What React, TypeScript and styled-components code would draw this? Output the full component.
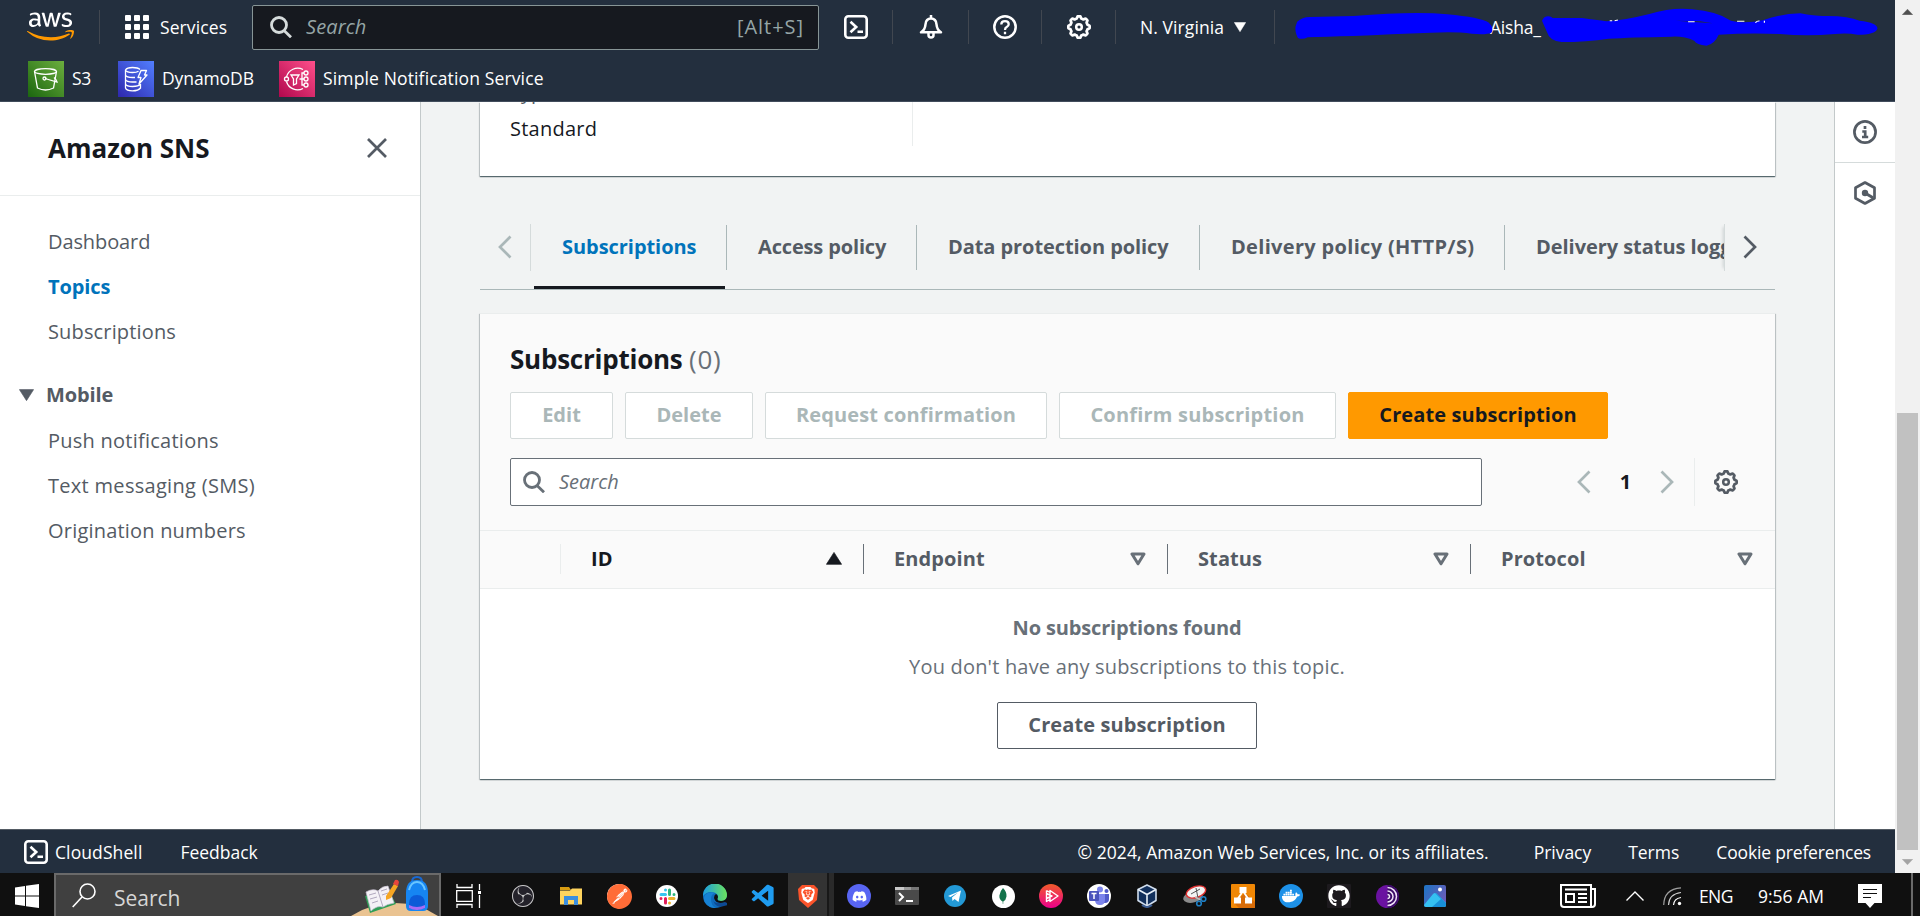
import React from "react";
import styled, { createGlobalStyle, css } from "styled-components";
import { FaAws, FaDiscord, FaDocker, FaGithub } from "react-icons/fa";
import { SiBrave, SiPostman, SiObsstudio } from "react-icons/si";
import { VscVscode } from "react-icons/vsc";

const colors = {
  navy: "#232f3e",
  ink: "#16191f",
  text: "#545b64",
  muted: "#687078",
  link: "#0073bb",
  disabled: "#aab7b8",
  line: "#eaeded",
  orange: "#ff9900",
};

const GlobalStyle = createGlobalStyle`
  * { box-sizing: border-box; }
  body {
    margin: 0;
    overflow: hidden;
    font-family: "Open Sans", "Noto Sans", sans-serif;
    font-size: 20px;
    color: ${colors.ink};
  }
  svg { display: block; flex: none; }
`;

/* ---------- page frame ---------- */

const Screen = styled.div`
  width: 1920px;
  height: 916px;
  display: flex;
  flex-direction: column;
  overflow: hidden;
`;

const BrowserView = styled.div`
  display: flex;
  height: 873px;
`;

const Page = styled.div`
  flex: 1;
  min-width: 0;
  display: flex;
  flex-direction: column;
`;

const Body = styled.div`
  flex: 1;
  min-height: 0;
  display: flex;
`;

/* ---------- top navigation ---------- */

const Header = styled.header`
  height: 102px;
  background: ${colors.navy};
  border-bottom: 1px solid #414d5c;
  color: #fff;
  font-size: 17.5px;
  font-weight: 500;
`;

const NavRow = styled.div`
  position: relative;
  height: 54px;
  display: flex;
  align-items: center;
  padding: 0 0 1px 27px;
`;

const NavRule = styled.i`
  width: 1px;
  height: 34px;
  background: #414750;
`;

const LogoLink = styled.a`
  display: flex;
  width: 72px;
  svg { fill: url(#awsFill); }
`;

const ServicesButton = styled.div`
  display: flex;
  align-items: center;
  gap: 11px;
  width: 152px;
  padding-left: 25px;
  letter-spacing: 0.1px;
`;

const GlobalSearch = styled.div`
  width: 567px;
  height: 45px;
  margin-top: 2px;
  display: flex;
  align-items: center;
  padding: 0 15px 2px 17px;
  border: 1px solid #879596;
  border-radius: 2px;
  background: ${colors.ink};
  color: #95a5a6;
  font-size: 20px;
  font-weight: 400;
  em { flex: 1; margin-left: 14px; letter-spacing: 0.1px; }
  span { letter-spacing: 0.95px; margin-right: -1px; }
`;

const NavCell = styled.div<{ $width: number }>`
  width: ${(p) => p.$width}px;
  height: 34px;
  display: flex;
  align-items: center;
  justify-content: center;
  gap: 10px;
  border-right: 1px solid #414750;
`;

const RegionLabel = styled.span`
  letter-spacing: 0.1px;
  margin-left: -4px;
`;

const Account = styled.div`
  padding-left: 215px;
  letter-spacing: -0.2px;
`;

const Redaction = styled.svg`
  position: absolute;
  left: 1280px;
  top: 0;
`;

const Favorites = styled.div`
  height: 47px;
  display: flex;
  align-items: center;
  gap: 26px;
  padding: 3px 0 0 28px;
`;

const Favorite = styled.div<{ $width?: number; $track?: number }>`
  display: flex;
  align-items: center;
  gap: 8px;
  width: ${(p) => (p.$width ? `${p.$width}px` : "auto")};
  letter-spacing: ${(p) => p.$track ?? 0}px;
  white-space: nowrap;
  span { padding-bottom: 2px; }
`;

/* ---------- side navigation ---------- */

const Sidebar = styled.nav`
  width: 421px;
  background: #fff;
  border-right: 1px solid #c3c9ca;
  box-shadow: 1px 0 1px rgba(0, 28, 36, 0.1);
`;

const SidebarHead = styled.div`
  height: 94px;
  display: flex;
  align-items: center;
  justify-content: space-between;
  padding: 0 32px 2px 48px;
  border-bottom: 1px solid ${colors.line};
  font-size: 26px;
  font-weight: 700;
`;

const NavList = styled.ul`
  list-style: none;
  margin: 0;
  padding: 23px 0 0 48px;
`;

const NavItem = styled.li<{ $active?: boolean; $track?: number }>`
  line-height: 45px;
  letter-spacing: ${(p) => p.$track ?? 0}px;
  color: ${(p) => (p.$active ? colors.link : colors.text)};
  font-weight: ${(p) => (p.$active ? 700 : 400)};
`;

const NavGroup = styled.li`
  display: flex;
  align-items: center;
  gap: 12px;
  margin: 18px 0 1px -29px;
  height: 45px;
  color: ${colors.text};
  font-weight: 700;
  letter-spacing: -0.1px;
`;

/* ---------- main content ---------- */

const Main = styled.main`
  flex: 1;
  min-width: 0;
  padding: 0 59px;
  background: #f1f3f3;
`;

const cardShadow = css`
  box-shadow: 0 1px 1px 0 rgba(0, 28, 36, 0.5), 1px 1px 1px 0 rgba(0, 28, 36, 0.15),
    -1px 1px 1px 0 rgba(0, 28, 36, 0.15);
`;

const DetailsCard = styled.section`
  height: 74px;
  display: flex;
  align-items: flex-end;
  padding: 0 30px 30px;
  background: #fff;
  overflow: hidden;
  ${cardShadow}
`;

const DetailColumn = styled.dl`
  width: 403px;
  margin: 0;
  border-right: 1px solid ${colors.line};
  dt { line-height: 37px; color: ${colors.text}; }
  dd { margin: 0; padding-top: 2px; line-height: 34px; letter-spacing: 0.25px; }
`;

const TabBar = styled.div`
  display: flex;
  height: 66px;
  margin: 48px 0 23px;
  border-bottom: 1px solid ${colors.disabled};
`;

const TabScroll = styled.div<{ $side: "left" | "right" }>`
  width: 51px;
  height: 47px;
  display: flex;
  align-items: center;
  justify-content: center;
  padding-bottom: 1px;
  ${(p) =>
    p.$side === "left"
      ? css`border-right: 1px solid #d5dbdb;`
      : css`border-left: 1px solid #d5dbdb; box-shadow: -4px 0 3px -3px rgba(0, 28, 36, 0.15);`}
`;

const TabList = styled.div`
  flex: 1;
  min-width: 0;
  display: flex;
  overflow: hidden;
`;

const Tab = styled.div<{ $active?: boolean; $width: number; $track?: number }>`
  flex: none;
  width: ${(p) => p.$width}px;
  display: flex;
  flex-direction: column;
  justify-content: space-between;
  padding-top: 1px;
  font-weight: 700;
  letter-spacing: ${(p) => p.$track ?? 0}px;
  white-space: nowrap;
  color: ${(p) => (p.$active ? colors.link : colors.text)};
  span {
    height: 45px;
    line-height: 43px;
    padding-left: 31px;
    border-right: 1px solid ${colors.disabled};
  }
  &::after {
    content: "";
    height: 3px;
    margin: 0 2px 0 3px;
    background: ${(p) => (p.$active ? colors.ink : "transparent")};
  }
`;

const TableCard = styled.section`
  height: 466px;
  background: #fff;
  ${cardShadow}
`;

const TableTop = styled.div`
  height: 218px;
  padding: 26px 30px 0;
  background: #fafafa;
  border-top: 1px solid ${colors.line};
  border-bottom: 1px solid ${colors.line};
`;

const TableTitle = styled.h2`
  margin: 0 0 14px;
  font-size: 26px;
  line-height: 38px;
  letter-spacing: -0.24px;
  small {
    font-size: 26px;
    font-weight: 400;
    letter-spacing: 0.7px;
    color: ${colors.muted};
  }
`;

const ButtonRow = styled.div`
  display: flex;
  gap: 12px;
`;

const Button = styled.button<{ $kind?: "disabled" | "primary"; $width: number; $track?: number }>`
  width: ${(p) => p.$width}px;
  height: 47px;
  padding: 0 0 1px;
  border: 1px solid ${colors.text};
  border-radius: 2px;
  background: #fff;
  color: ${colors.text};
  font: 700 20px/44px "Open Sans", sans-serif;
  letter-spacing: ${(p) => p.$track ?? 0.1}px;
  white-space: nowrap;
  ${(p) => p.$kind === "disabled" && css`border-color: #d5dbdb; color: ${colors.disabled};`}
  ${(p) => p.$kind === "primary" && css`border-color: ${colors.orange}; background: ${colors.orange}; color: ${colors.ink};`}
`;

const FilterRow = styled.div`
  display: flex;
  align-items: center;
  margin-top: 19px;
`;

const FilterInput = styled.div`
  width: 972px;
  height: 48px;
  display: flex;
  align-items: center;
  gap: 14px;
  padding: 0 0 1px 12px;
  border: 1px solid ${colors.muted};
  border-radius: 2px;
  background: #fff;
  color: ${colors.muted};
  em { padding-bottom: 1px; }
`;

const Pagination = styled.div`
  display: flex;
  align-items: center;
  width: 213px;
  height: 48px;
  padding: 0 20px 1px 95px;
  justify-content: space-between;
  border-right: 1px solid ${colors.line};
  font-weight: 700;
`;

const Preferences = styled.div`
  padding-left: 19px;
`;

const HeadRow = styled.div`
  display: grid;
  grid-template-columns: 81px 303px 304px 303px 304px;
  align-items: center;
  height: 58px;
  padding-bottom: 1px;
  background: #fafafa;
  border-bottom: 1px solid ${colors.line};
`;

const HeadCell = styled.div<{ $tone?: "faint" | "none"; $sorted?: boolean }>`
  height: 30px;
  display: flex;
  align-items: center;
  justify-content: space-between;
  padding: 0 21px 1px 30px;
  border-right: 1px solid
    ${(p) => (p.$tone === "none" ? "transparent" : p.$tone === "faint" ? colors.line : colors.muted)};
  color: ${(p) => (p.$sorted ? colors.ink : colors.text)};
  font-weight: 700;
  letter-spacing: 0.1px;
`;

const EmptyState = styled.div`
  display: flex;
  flex-direction: column;
  align-items: center;
  padding: 19px 1px 0 0;
  color: ${colors.muted};
  line-height: 40px;
  b { letter-spacing: -0.15px; }
  p { margin: -1px 0 15px; letter-spacing: 0.19px; }
`;

/* ---------- right rail, footer, scrollbar ---------- */

const HelpRail = styled.aside`
  width: 61px;
  background: #fff;
  border-left: 1px solid #c3c9ca;
`;

const RailItem = styled.div`
  height: 61px;
  display: flex;
  align-items: center;
  justify-content: center;
  border-bottom: 1px solid #d5dbdb;
  &:last-child { height: 60px; border: 0; }
`;

const Footer = styled.footer`
  height: 44px;
  display: flex;
  align-items: center;
  padding: 1px 24px 0;
  background: ${colors.navy};
  border-top: 1px solid #545b64;
  color: #fff;
  font-size: 17.5px;
  font-weight: 500;
`;

const FooterItem = styled.span<{ $before: number; $track?: number }>`
  margin-left: ${(p) => p.$before}px;
  padding-bottom: 1px;
  letter-spacing: ${(p) => p.$track ?? 0}px;
  white-space: nowrap;
`;

const Spacer = styled.span`
  flex: 1;
`;

const Scrollbar = styled.div`
  width: 25px;
  display: flex;
  flex-direction: column;
  align-items: center;
  justify-content: space-between;
  background: #f1f1f1;
`;

const ScrollArrow = styled.div`
  height: 23px;
  display: flex;
  align-items: center;
`;

const ScrollThumb = styled.div`
  width: 21px;
  height: 437px;
  margin-top: auto;
  background: #c1c1c1;
`;

/* ---------- desktop taskbar ---------- */

const Taskbar = styled.div`
  flex: 1;
  display: flex;
  background: #101010;
  color: #fff;
`;

const StartButton = styled.div`
  width: 54px;
  display: flex;
  align-items: center;
  padding: 3px 0 0 15px;
`;

const TaskSearch = styled.div`
  width: 387px;
  display: flex;
  align-items: center;
  padding-left: 16px;
  border: 2px solid #6a6a6a;
  border-bottom-width: 0;
  background: #404040;
  color: #d6d6d6;
  font-size: 21px;
  span { flex: 1; margin-left: 18px; padding-top: 4px; }
`;

const TaskView = styled.div`
  width: 58px;
  padding: 11px 0 0 15px;
`;

const AppButton = styled.div<{ $active?: boolean }>`
  width: 48px;
  display: flex;
  align-items: center;
  justify-content: center;
  padding-top: 3px;
  ${(p) =>
    p.$active &&
    css`
      padding-right: 6px;
      background: linear-gradient(90deg, transparent 1px, #333 1px 40px, #181818 40px 42px, #2a2a2a 42px 47px, transparent 47px);
    `}
`;

const Badge = styled.div<{ $bg: string; $size?: number; $square?: boolean }>`
  width: ${(p) => p.$size ?? 24}px;
  height: ${(p) => p.$size ?? 24}px;
  display: flex;
  align-items: center;
  justify-content: center;
  border-radius: ${(p) => (p.$square ? 1 : 12)}px;
  background: ${(p) => p.$bg};
  color: #fff;
`;

const Tray = styled.div`
  flex: 1;
  display: flex;
  align-items: center;
  justify-content: flex-end;
  padding: 3px 7px 0 0;
  font-size: 17.5px;
`;

const TrayLabel = styled.span<{ $width: number; $track?: number }>`
  width: ${(p) => p.$width}px;
  letter-spacing: ${(p) => p.$track ?? 0}px;
  white-space: nowrap;
`;

const TrayIcon = styled.span<{ $width: number }>`
  width: ${(p) => p.$width}px;
`;

const ShowDesktop = styled.i`
  width: 2px;
  height: 43px;
  margin-top: -3px;
  background: #6a6a6a;
`;

/* ---------- icons ---------- */

const gearPath = (() => {
  const pts: string[] = [];
  for (let i = 0; i < 96; i++) {
    const a = (i / 96) * Math.PI * 2;
    const wave = Math.max(-1, Math.min(1, 1.9 * Math.cos(8 * a)));
    const r = 9.7 + wave * 1;
    pts.push(`${(12 + r * Math.sin(a)).toFixed(2)} ${(12 - r * Math.cos(a)).toFixed(2)}`);
  }
  return `M${pts.join("L")}Z`;
})();

const Gear = ({ size = 24, color = "#fff" }) => (
  <svg width={size} height={size} viewBox="0 0 24 24" fill="none" stroke={color} strokeWidth="2.7">
    <path d={gearPath} strokeLinejoin="round" />
    <circle cx="12" cy="12" r="2.8" strokeWidth="2.5" />
  </svg>
);

const Magnifier = ({ color, size = 22 }: { color: string; size?: number }) => (
  <svg width={size} height={size} viewBox="0 0 22 22" fill="none" stroke={color} strokeWidth="2.8">
    <circle cx="9" cy="9" r="7.5" />
    <path d="M14 14.5l7 6.8" />
  </svg>
);

const Chevron = ({ dir, color }: { dir: "left" | "right"; color: string }) => (
  <svg width="14" height="24" viewBox="0 0 14 24" fill="none" stroke={color} strokeWidth="2.7">
    <path d={dir === "left" ? "M12.500 1.500L2 12l10.500 10.500" : "M1.500 1.500L12 12 1.500 22.500"} />
  </svg>
);

const Shell = () => (
  <svg width="24" height="24" viewBox="0 0 24 24" fill="none" stroke="#fff" strokeWidth="2.6">
    <rect x="1.300" y="1.300" width="21.400" height="21.400" rx="3" />
    <path d="M6.500 6.800l5.700 5.200-5.700 5.200M13.500 16.700H19" />
  </svg>
);

const Caret = ({ w = 12, h = 10, color = "#fff", up = false }) => (
  <svg width={w} height={h} viewBox="0 0 12 10" preserveAspectRatio="none">
    <path d={up ? "M6 .3L11.700 9.500H.3z" : "M.3.500h11.400L6 9.700z"} fill={color} stroke={color} strokeWidth=".5" strokeLinejoin="round" />
  </svg>
);

const SortCaret = () => (
  <svg width="16" height="14" viewBox="0 0 16 14">
    <path d="M2 2h12L8 11.800z" fill="none" stroke={colors.muted} strokeWidth="3" strokeLinejoin="round" />
  </svg>
);

const ServiceTile = ({ id, from, to, children }: { id: string; from: string; to: string; children: React.ReactNode }) => (
  <svg width="36" height="36" viewBox="0 0 36 36" fill="none" stroke="#fff" strokeWidth="1.300">
    <defs>
      <linearGradient id={id} x1="0" y1="1" x2="1" y2="0">
        <stop stopColor={from} />
        <stop offset="1" stopColor={to} />
      </linearGradient>
    </defs>
    <rect width="36" height="36" fill={`url(#${id})`} stroke="none" />
    {children}
  </svg>
);

const BookAndBag = () => (
  <svg width="88" height="41" viewBox="0 0 88 41">
    <path d="M0 41Q20 28 44 28t43 13z" fill="#eac391" />
    <path d="M14 21l24-5 7 13-26 9z" fill="#2e9e56" />
    <path d="M15 17q7-4 12-1 4-5 10-5l6 17q-7 1-11 4-6-2-12 4z" fill="#f4f1f6" stroke="#c9c2d3" strokeWidth=".7" />
    <path d="M27 16l5 16M18 20l7-2M19 24l7-2M21 28l6-2M30 16l6-2M31 20l6-2" stroke="#a9a0b8" strokeWidth=".9" />
    <path d="M35 21L43 9l4 2-7 12-5 2z" fill="#f6a623" />
    <path d="M42 9l2-4q3-1 4 2l-1 4z" fill="#e8453c" />
    <g transform="translate(2 1)">
      <path d="M59 6q0-5 5-5t5 5" fill="none" stroke="#1769d6" strokeWidth="2" />
      <path d="M53 17q0-13 11-13t11 13v13q0 5-5 5H58q-5 0-5-5z" fill="#1685f2" />
      <path d="M56 14Q58 6 64 6t8 8" fill="none" stroke="#69c5ff" strokeWidth="2" />
      <path d="M56 28q0-9 8-9t8 9v4q-8 3-16 0z" fill="#0c5bd8" />
      <path d="M56 29q8 4 16 0v3q-8 4-16 0z" fill="#a86cf5" />
    </g>
  </svg>
);

const Explorer = () => (
  <svg width="24" height="20" viewBox="0 0 24 20">
    <path d="M1 1h9l2 3H1z" fill="#d89c12" />
    <path d="M1 4.500h10l2-2h10v16H1z" fill="#ffd45e" />
    <path d="M5 19v-9h14v9h-4v-5H9v5z" fill="#3b8ede" />
  </svg>
);

const Slack = () => (
  <svg width="17" height="17" viewBox="0 0 17 17" strokeWidth="3" strokeLinecap="round">
    <path d="M6.500 2v0M2 6.500h4.500" stroke="#36c5f0" />
    <path d="M10.500 2v4.500M15 6.500v0" stroke="#2eb67d" />
    <path d="M10.500 10.500H15M10.500 15v0" stroke="#ecb22e" />
    <path d="M6.500 10.500V15M2 10.500v0" stroke="#e01e5a" />
  </svg>
);

const Edge = () => (
  <svg width="24" height="24" viewBox="0 0 24 24">
    <defs>
      <linearGradient id="edgeTop" x1="0" x2="1">
        <stop stopColor="#1b9de2" />
        <stop offset="1" stopColor="#6be35c" />
      </linearGradient>
    </defs>
    <circle cx="12" cy="12" r="12" fill="#0f6cbd" />
    <path d="M0 12A12 12 0 0 1 24 11q0 6-6 6-4 0-3.500-2.500Q16 11 12.500 9 5 6 0 12z" fill="url(#edgeTop)" />
    <path d="M8 15q0-5 4-6-6-2-10 2-3 5 2 10 4 3.500 9 3-5-2-5-9z" fill="#1782d4" />
    <path d="M10 14q-1 7 12 4l1-1h2v4l-8 2Q10 21 10 14z" fill="#0d4a94" />
    <path d="M14.500 14.500Q14 17 18 17q4.500-.2 6-4v6l-2-1q-9 3-11-4 0-3 2-4 3 2 1.500 4.500z" fill="#101010" />
  </svg>
);

const Prompt = () => (
  <svg width="24" height="18" viewBox="0 0 24 18">
    <rect width="24" height="18" rx="1" fill="#4a4a4a" />
    <path d="M0 0h9v3H0z" fill="#c8c8c8" />
    <path d="M9 0h7v3H9z" fill="#9a9a9a" />
    <path d="M16 0h8v3h-8z" fill="#777" />
    <path d="M4 6l4 4-4 4M11 14h7" fill="none" stroke="#fff" strokeWidth="2" />
  </svg>
);

const Telegram = () => (
  <svg width="22" height="22" viewBox="0 0 22 22">
    <path d="M4 11l13-5.500-2.500 11.500-4-3-2 2-.5-3.500 6-5-7.500 4.500z" fill="#fff" />
  </svg>
);

const Play = () => (
  <svg width="24" height="24" viewBox="0 0 24 24" fill="none" stroke="#fff" strokeWidth="1.400" strokeLinejoin="round">
    <path d="M7.500 6.500v11l3.500-2M7.500 6.500l3.500 2M11 6.500v11l8-5.500zM7.500 9.500L13 12l-5.500 2.500z" />
  </svg>
);

const Teams = () => (
  <svg width="22" height="22" viewBox="0 0 22 22">
    <circle cx="12" cy="4.500" r="3" fill="#7b83eb" />
    <circle cx="18.500" cy="6" r="2" fill="#5059c9" />
    <path d="M15 9h6v5q0 4-4 4h-2z" fill="#5059c9" />
    <path d="M7 9h10v6q0 5-5 5t-5-5z" fill="#7b83eb" />
    <rect x="1" y="6" width="10" height="10" rx="1" fill="#4b53bc" />
    <path d="M3.500 8.500h5M6 8.500V14" stroke="#fff" strokeWidth="1.500" />
  </svg>
);

const VirtualBox = () => (
  <svg width="22" height="24" viewBox="0 0 22 24">
    <path d="M11 1l9 4.500v11L11 22l-9-5.500v-11z" fill="#12305c" stroke="#cfdcec" strokeWidth="1.600" strokeLinejoin="round" />
    <path d="M2 5.500l9 5 9-5M11 10.500V22" fill="none" stroke="#e8f0f8" strokeWidth="1.600" />
    <path d="M6 21q5 4 10 0" fill="none" stroke="#3b5d94" strokeWidth="2" />
  </svg>
);

const Snip = () => (
  <svg width="24" height="22" viewBox="0 0 24 22">
    <ellipse cx="10" cy="12" rx="10" ry="5.500" fill="#8b8b8b" transform="rotate(-15 10 12)" />
    <ellipse cx="13" cy="7" rx="10" ry="5.500" fill="#f3f3f3" stroke="#e03131" strokeWidth="1.400" transform="rotate(-18 13 7)" />
    <path d="M8 9l9-5M13 3l2 10" stroke="#555" />
    <path d="M12 12l6 3" stroke="#bbb" strokeWidth="1.500" />
    <circle cx="20.500" cy="14" r="2.300" fill="none" stroke="#1e7fc4" strokeWidth="1.600" />
    <circle cx="16" cy="18.500" r="2.300" fill="none" stroke="#1e7fc4" strokeWidth="1.600" />
  </svg>
);

const DrawIo = () => (
  <svg width="24" height="24" viewBox="0 0 24 24">
    <path d="M14 9l10 9v6H8l-5-5z" fill="#d86c08" />
    <path d="M12 7L6 16M12 7l6 9" stroke="#fff" strokeWidth="1.800" />
    <path d="M8.500 3h7v6h-7zM3 13.500h7v6H3zM14 13.500h7v6h-7z" fill="#fff" />
  </svg>
);

const Tor = () => (
  <svg width="23" height="23" viewBox="0 0 23 23">
    <circle cx="11.500" cy="11.500" r="11.500" fill="#6a12a0" />
    <path d="M11.500 0a11.500 11.500 0 0 1 0 23z" fill="#3a0a66" />
    <path d="M11.500 2.500a9 9 0 0 1 0 18M11.500 6a5.500 5.500 0 0 1 0 11M11.500 9.500a2 2 0 0 1 0 4" fill="none" stroke="#efe3f7" strokeWidth="1.500" />
  </svg>
);

const Photos = () => (
  <svg width="22" height="22" viewBox="0 0 22 22">
    <defs>
      <linearGradient id="photoSky" x2="1" y2=".6">
        <stop stopColor="#1c74c4" />
        <stop offset="1" stopColor="#6a5cb8" />
      </linearGradient>
    </defs>
    <rect width="22" height="22" rx="2" fill="url(#photoSky)" />
    <path d="M0 20L9 9q2-2 4 0l9 9v2q0 2-2 2H2q-2 0-2-2z" fill="#35c1f1" />
    <path d="M11 8q1 0 2 1l9 9v2q0 2-2 2H8L17 14z" fill="#1890d8" />
    <circle cx="16" cy="4.500" r="2" fill="#fff" />
  </svg>
);

/* ---------- data ---------- */

const tabs = [
  { label: "Subscriptions", width: 196, track: -0.05, active: true },
  { label: "Access policy", width: 190, track: -0.15 },
  { label: "Data protection policy", width: 283, track: -0.07 },
  { label: "Delivery policy (HTTP/S)", width: 305, track: 0.32 },
  { label: "Delivery status logging", width: 300, track: -0.05 },
];

const taskApps: { name: string; icon: React.ReactNode; active?: boolean }[] = [
  { name: "obs", icon: <Badge $bg="#24222a" $size={22}><SiObsstudio size={22} color="#c9c9c9" /></Badge> },
  { name: "explorer", icon: <Explorer /> },
  { name: "postman", icon: <Badge $bg="#fff"><SiPostman size={25} color="#ff6c37" /></Badge> },
  { name: "slack", icon: <Badge $bg="#fff" $size={22}><Slack /></Badge> },
  { name: "edge", icon: <Edge /> },
  { name: "code", icon: <VscVscode size={27} color="#1f9cf0" /> },
  {
    name: "brave",
    active: true,
    icon: (
      <svg width="20" height="24" viewBox="0 0 20 24">
        <path d="M4 1h12l4 4-1 11-9 8-9-8L0 5z" fill="#fb542b" />
        <SiBrave x={2} y={3} size={16} color="#fff" />
      </svg>
    ),
  },
  { name: "discord", icon: <Badge $bg="#5865f2"><FaDiscord size={15} /></Badge> },
  { name: "prompt", icon: <Prompt /> },
  { name: "telegram", icon: <Badge $bg="#2399d6" $size={22}><Telegram /></Badge> },
  {
    name: "mongo",
    icon: (
      <Badge $bg="#fff" $size={23}>
        <svg width="8" height="16" viewBox="0 0 8 16">
          <path d="M4 0Q8 4 7.500 8.500 7 12 4.300 13.500L4.200 16h-.4l-.2-2.500Q0 11.500.4 7.500 1 3 4 0z" fill="#13734b" />
        </svg>
      </Badge>
    ),
  },
  { name: "play", icon: <Badge $bg="linear-gradient(#f15b2a, #ec008c)"><Play /></Badge> },
  { name: "teams", icon: <Badge $bg="#fff"><Teams /></Badge> },
  { name: "virtualbox", icon: <VirtualBox /> },
  { name: "snip", icon: <Snip /> },
  { name: "drawio", icon: <Badge $bg="#f08705" $square><DrawIo /></Badge> },
  { name: "docker", icon: <Badge $bg="#1d91e8"><FaDocker size={18} /></Badge> },
  { name: "github", icon: <Badge $bg="#1d1a1e" $square><FaGithub size={22} /></Badge> },
  { name: "tor", icon: <Tor /> },
  { name: "photos", icon: <Photos /> },
];

/* ---------- sections ---------- */

const TopNavigation = () => (
  <Header>
    <NavRow>
      <svg width="0" height="0">
        <linearGradient id="awsFill" gradientUnits="userSpaceOnUse" x1="0" y1="0" x2="0" y2="512">
          <stop offset=".595" stopColor="#fff" />
          <stop offset=".595" stopColor="#ff9900" />
        </linearGradient>
      </svg>
      <LogoLink>
        <FaAws size="47px" />
      </LogoLink>
      <NavRule />
      <ServicesButton>
        <svg width="24" height="24" fill="#fff">
          {[0, 9, 18].map((y) => [0, 9, 18].map((x) => <rect key={`${x}-${y}`} x={x} y={y} width="6" height="6" rx="1" />))}
        </svg>
        Services
      </ServicesButton>
      <GlobalSearch>
        <Magnifier color="#d5dbdb" />
        <em>Search</em>
        <span>[Alt+S]</span>
      </GlobalSearch>
      <NavCell $width={74}><Shell /></NavCell>
      <NavCell $width={76}>
        <svg width="24" height="24" viewBox="0 0 24 24" fill="none" stroke="#fff" strokeWidth="2.500" strokeLinejoin="round">
          <path d="M12 0v4M2 17.300h20q-4-2.300-4.500-8Q17 3.500 12 3.500T6.500 9.300Q6 15 2 17.300z" />
          <path d="M9.500 18v2q0 2.500 2.500 2.500t2.500-2.500v-2" />
        </svg>
      </NavCell>
      <NavCell $width={73}>
        <svg width="24" height="24" viewBox="0 0 24 24" fill="none" stroke="#fff" strokeWidth="2.500">
          <circle cx="12" cy="12" r="10.700" />
          <path d="M8.300 9.500Q8.300 6.200 12 6.200t3.700 3q0 1.800-2 2.900Q12 13 12 15M12 16.800v2.400" strokeWidth="2.300" />
        </svg>
      </NavCell>
      <NavCell $width={74}><Gear /></NavCell>
      <NavCell $width={159}>
        <RegionLabel>N. Virginia</RegionLabel>
        <Caret />
      </NavCell>
      <Account>Aisha_</Account>
      <Redaction width="615" height="50" viewBox="0 0 1507 150" preserveAspectRatio="none">
        <path d="M42 65Q55 50 75 51L180 48Q330 33 410 43 490 52 512 68 525 85 518 98 505 105 470 101 430 94 370 98 270 102 180 108 110 110 68 112 55 120 44 114 36 95 38 80z" fill="#00f" />
        <path d="M642 62Q648 45 664 50L668 54H740Q775 60 800 64 840 62 905 42 960 22 1010 28 1070 34 1105 62 1140 72 1185 60 1225 42 1275 40 1310 48 1330 48 1390 46 1420 62 1464 68 1464 86 1458 104 1415 104 1390 98 1360 102 1290 110 1225 102 1150 98 1075 104 1065 132 1045 137 1020 134 1015 122 990 108 960 110 860 112 805 116 750 126 690 126 660 122 655 98z" fill="#00f" />
        <path d="M970 62l90 8-30-6z" fill={colors.navy} />
        <path d="M1000 65h16M808 62h6M820 62l8-2M1120 64h18M1165 68q4-6 10-5M1187 62v6" stroke="#fff" strokeWidth="3" fill="none" />
      </Redaction>
    </NavRow>
    <Favorites>
      <Favorite $width={64} $track={-0.4}>
        <ServiceTile id="s3" from="#1b660f" to="#6cae3e">
          <ellipse cx="17.500" cy="10.500" rx="11" ry="2.800" />
          <path d="M6.500 10.500l3 16.500q8 4 16 0l3-16.500" />
          <path d="M17 17.500l12 3.500q-.5-2.500-3-4.500" />
          <circle cx="16.500" cy="17.500" r="1.500" />
        </ServiceTile>
        <span>S3</span>
      </Favorite>
      <Favorite $width={135} $track={-0.1}>
        <ServiceTile id="dynamo" from="#2e27ad" to="#527fff">
          <path d="M22 8.500Q20 6.500 14.500 6.500T7.500 9v18q1 2.800 7 2.800t8-2.800v-4M7.500 9q1 2.500 7 2.500 4 0 6-1.300M7.500 14q1 2.500 7 2.500h2.500M7.500 18.500q1 2.500 7 2.500h4M7.500 23q1 2.500 7 2.500t8-2.500" />
          <path d="M23 9.500h5.500L26.500 14H29l-8 9 2-6.500h-3z" strokeLinejoin="round" />
        </ServiceTile>
        <span>DynamoDB</span>
      </Favorite>
      <Favorite $track={0.14}>
        <ServiceTile id="sns" from="#b0084d" to="#ff4f8b">
          <path d="M24 8.500A11.500 11.500 0 0 0 7.500 16M7.500 20.500A11.500 11.500 0 0 0 24 27.500M12 14h8l-2.500 4v4.500l-3 1.500v-6z" />
          <circle cx="7.500" cy="18" r="2" />
          <circle cx="27" cy="12" r="2" />
          <circle cx="27" cy="18" r="2" />
          <circle cx="27" cy="24" r="2" />
          <path d="M20.500 18H25M25 12h-2v12h2" />
        </ServiceTile>
        <span>Simple Notification Service</span>
      </Favorite>
    </Favorites>
  </Header>
);

const SideNavigation = () => (
  <Sidebar>
    <SidebarHead>
      Amazon SNS
      <svg width="22" height="22" viewBox="0 0 22 22" stroke={colors.text} strokeWidth="2.700">
        <path d="M2 2l18 18M20 2L2 20" />
      </svg>
    </SidebarHead>
    <NavList>
      <NavItem $track={-0.1}>Dashboard</NavItem>
      <NavItem $active $track={-0.1}>Topics</NavItem>
      <NavItem $track={0.15}>Subscriptions</NavItem>
      <NavGroup>
        <Caret w={15} h={12} color={colors.text} />
        Mobile
      </NavGroup>
      <NavItem $track={0.25}>Push notifications</NavItem>
      <NavItem $track={0.3}>Text messaging (SMS)</NavItem>
      <NavItem $track={0.2}>Origination numbers</NavItem>
    </NavList>
  </Sidebar>
);

const TopicContent = () => (
  <Main>
    <DetailsCard>
      <DetailColumn>
        <dt>Type</dt>
        <dd>Standard</dd>
      </DetailColumn>
    </DetailsCard>
    <TabBar>
      <TabScroll $side="left"><Chevron dir="left" color={colors.disabled} /></TabScroll>
      <TabList>
        {tabs.map((t) => (
          <Tab key={t.label} $active={t.active} $width={t.width} $track={t.track}>
            <span>{t.label}</span>
          </Tab>
        ))}
      </TabList>
      <TabScroll $side="right"><Chevron dir="right" color={colors.text} /></TabScroll>
    </TabBar>
    <TableCard>
      <TableTop>
        <TableTitle>Subscriptions <small>(0)</small></TableTitle>
        <ButtonRow>
          <Button $kind="disabled" $width={103} $track={0}>Edit</Button>
          <Button $kind="disabled" $width={128} $track={0}>Delete</Button>
          <Button $kind="disabled" $width={282} $track={0.15}>Request confirmation</Button>
          <Button $kind="disabled" $width={277} $track={0.2}>Confirm subscription</Button>
          <Button $kind="primary" $width={260}>Create subscription</Button>
        </ButtonRow>
        <FilterRow>
          <FilterInput>
            <Magnifier color={colors.muted} />
            <em>Search</em>
          </FilterInput>
          <Pagination>
            <Chevron dir="left" color={colors.disabled} />
            1
            <Chevron dir="right" color={colors.disabled} />
          </Pagination>
          <Preferences><Gear color={colors.text} /></Preferences>
        </FilterRow>
      </TableTop>
      <HeadRow>
        <HeadCell $tone="faint" />
        <HeadCell $sorted>ID <Caret w={16} h={13} up color={colors.ink} /></HeadCell>
        <HeadCell>Endpoint <SortCaret /></HeadCell>
        <HeadCell>Status <SortCaret /></HeadCell>
        <HeadCell $tone="none">Protocol <SortCaret /></HeadCell>
      </HeadRow>
      <EmptyState>
        <b>No subscriptions found</b>
        <p>You don't have any subscriptions to this topic.</p>
        <Button $width={260}>Create subscription</Button>
      </EmptyState>
    </TableCard>
  </Main>
);

const DesktopTaskbar = () => (
  <Taskbar>
    <StartButton>
      <svg width="24" height="24" viewBox="0 0 24 24" fill="#fff">
        <path d="M0 3.400l10-1.400v9.500H0zM11 1.800L24 0v11.500H11zM0 12.500h10V22L0 20.600zM11 12.500h13V24l-13-1.800z" />
      </svg>
    </StartButton>
    <TaskSearch>
      <svg width="24" height="25" viewBox="0 0 24 25" fill="none" stroke="#fff" strokeWidth="1.600">
        <circle cx="15.500" cy="8.500" r="7.500" />
        <path d="M10 14L.7 24" />
      </svg>
      <span>Search</span>
      <BookAndBag />
    </TaskSearch>
    <TaskView>
      <svg width="26" height="24" viewBox="0 0 26 24" fill="none" stroke="#fff" strokeWidth="1.300">
        <path d="M1 0v3.500h15V0M1 24v-3.500h15V24M.7 6.700h15.600v10.600H.7zM23.500 0v6M23.500 11v13" />
        <path d="M22 7h3v3h-3z" fill="#fff" stroke="none" />
      </svg>
    </TaskView>
    {taskApps.map((a) => (
      <AppButton key={a.name} $active={a.active}>{a.icon}</AppButton>
    ))}
    <Tray>
      <TrayIcon $width={66}>
        <svg width="36" height="24" viewBox="0 0 36 24" fill="none" stroke="#fff" strokeWidth="2">
          <path d="M31 22V1H1v19q0 3 3 3h28q3 0 3-3V5h-4" />
          <path d="M5 5.500h22M6 10h8v8H6zM18 10h9M18 14h9M18 18h9" />
        </svg>
      </TrayIcon>
      <TrayIcon $width={37}>
        <svg width="18" height="10" viewBox="0 0 18 10" fill="none" stroke="#fff" strokeWidth="1.400">
          <path d="M.5 9.500L9 1l8.500 8.500" />
        </svg>
      </TrayIcon>
      <TrayIcon $width={36}>
        <svg width="19" height="19" viewBox="0 0 19 19" fill="none" stroke="#fff" strokeWidth="1.200">
          <path d="M.7 18Q1 2 18 .8" opacity=".6" />
          <path d="M5.500 18Q6 7 18 5.500" opacity=".8" />
          <path d="M10.500 18Q11 11.500 18 10.500" />
          <circle cx="16.500" cy="16.500" r="1.700" fill="#fff" stroke="none" />
        </svg>
      </TrayIcon>
      <TrayLabel $width={59} $track={-0.6}>ENG</TrayLabel>
      <TrayLabel $width={100}>9:56 AM</TrayLabel>
      <TrayIcon $width={53}>
        <svg width="24" height="24" viewBox="0 0 24 24">
          <path d="M0 0h24v19h-7.500L12 24l-4.500-5H0z" fill="#fff" />
          <path d="M5 5.500h14M5 9.500h14M5 13.500h8" stroke="#101010" strokeWidth="1.200" />
        </svg>
      </TrayIcon>
      <ShowDesktop />
    </Tray>
  </Taskbar>
);

export default function App() {
  return (
    <Screen>
      <GlobalStyle />
      <BrowserView>
        <Page>
          <TopNavigation />
          <Body>
            <SideNavigation />
            <TopicContent />
            <HelpRail>
              <RailItem>
                <svg width="24" height="24" viewBox="0 0 24 24" fill="none" stroke={colors.text} strokeWidth="2.700">
                  <circle cx="12" cy="12" r="10.600" />
                  <path d="M12 6v3M9.300 11.500h2.900V17M9 17h6.200" />
                </svg>
              </RailItem>
              <RailItem>
                <svg width="24" height="24" viewBox="0 0 24 24" fill="none" stroke={colors.text} strokeWidth="2.700">
                  <path d="M12 1.500l9.500 5.300v10.400L12 22.500l-9.500-5.300V6.800z" strokeLinejoin="round" />
                  <circle cx="12" cy="12" r="3.200" fill={colors.text} stroke="none" />
                  <path d="M12 12l8 4.800" strokeWidth="3" />
                </svg>
              </RailItem>
            </HelpRail>
          </Body>
          <Footer>
            <Shell />
            <FooterItem $before={7} $track={0.1}>CloudShell</FooterItem>
            <FooterItem $before={38}>Feedback</FooterItem>
            <Spacer />
            <FooterItem $before={0} $track={0.06}>© 2024, Amazon Web Services, Inc. or its affiliates.</FooterItem>
            <FooterItem $before={45} $track={-0.05}>Privacy</FooterItem>
            <FooterItem $before={37}>Terms</FooterItem>
            <FooterItem $before={37} $track={-0.17}>Cookie preferences</FooterItem>
          </Footer>
        </Page>
        <Scrollbar>
          <ScrollArrow><Caret w={11} h={6} up color="#505050" /></ScrollArrow>
          <ScrollThumb />
          <ScrollArrow><Caret w={11} h={6} color="#a3a3a3" /></ScrollArrow>
        </Scrollbar>
      </BrowserView>
      <DesktopTaskbar />
    </Screen>
  );
}
